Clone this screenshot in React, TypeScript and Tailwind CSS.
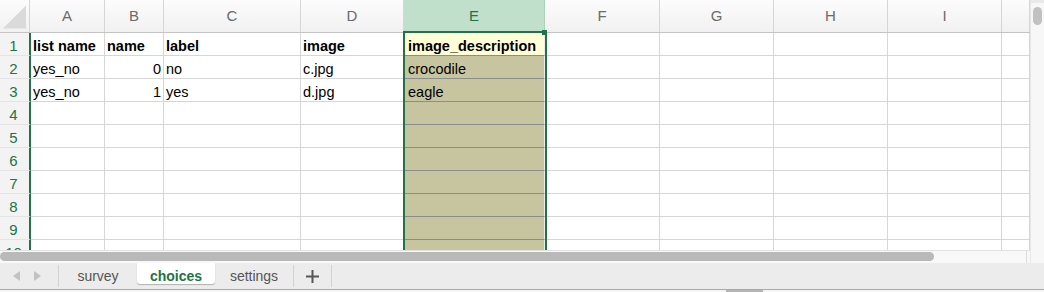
import React from "react";

type Col = { key: string; w: string; hw: string };

const cols: Col[] = [
  { key: "A", w: "w-[74px]", hw: "w-[75px]" },
  { key: "B", w: "w-[59px]", hw: "w-[59px]" },
  { key: "C", w: "w-[137px]", hw: "w-[137px]" },
  { key: "D", w: "w-[103px]", hw: "w-[103px]" },
  { key: "E", w: "w-[141px]", hw: "w-[141px]" },
  { key: "F", w: "w-[115px]", hw: "w-[115px]" },
  { key: "G", w: "w-[114px]", hw: "w-[114px]" },
  { key: "H", w: "w-[114px]", hw: "w-[114px]" },
  { key: "I", w: "w-[114px]", hw: "w-[114px]" },
  { key: "", w: "flex-1", hw: "flex-1" },
];

// cell values per row, "#" prefix = number (right aligned)
const data: string[][] = [
  ["list name", "name", "label", "image", "image_description"],
  ["yes_no", "#0", "no", "c.jpg", "crocodile"],
  ["yes_no", "#1", "yes", "d.jpg", "eagle"],
];

const GREEN = "text-[#217346]";

function HeaderRow() {
  return (
    <div className="flex h-[33px] border-b border-[#c4c4c4] bg-gradient-to-b from-[#fcfcfc] to-[#f1f1f1]">
      <div className="w-[30px] shrink-0 border-r border-[#d6d6d6] flex items-end justify-end p-[3px]">
        <svg width="24" height="24" viewBox="0 0 24 24">
          <polygon points="24,0 24,24 0,24" fill="#dadada" />
        </svg>
      </div>
      {cols.map((c, i) =>
        c.key === "E" ? (
          <div
            key={i}
            className={`${c.hw} shrink-0 border-r border-[#a8d3b6] bg-[#c1e0cb] flex items-center justify-center pt-[1px] text-[15px] ${GREEN}`}
          >
            {c.key}
          </div>
        ) : (
          <div
            key={i}
            className={`${c.hw} shrink-0 border-r border-[#d6d6d6] flex items-center justify-center pt-[1px] text-[15px] text-[#6b6b6b]`}
          >
            {c.key}
          </div>
        )
      )}
    </div>
  );
}

function BodyRow({ n, values }: { n: number; values: string[] }) {
  return (
    <div className="flex h-[23px] shrink-0">
      <div
        className={`w-[31px] shrink-0 border-r-2 border-r-[#217346] border-b border-b-[#e4e4e4] bg-[#f3f3f3] flex items-end justify-center pb-[1px] pr-[2px] leading-[17px] text-[15px] ${GREEN}`}
      >
        {n}
      </div>
      {cols.map((c, i) => {
        const raw = values[i] ?? "";
        const isNum = raw.startsWith("#");
        const text = isNum ? raw.slice(1) : raw;
        const bold = n === 1;
        if (c.key === "E") {
          return (
            <div
              key={i}
              className={`${c.w} shrink-0 border-r border-r-[#ececec] border-b border-b-[#8c8c8c] flex items-end px-[4px] leading-[17px] text-[14.5px] text-black ${
                n === 1 ? "bg-[#fffed6] font-bold" : "bg-[#c7c59f]"
              }`}
            >
              {text}
            </div>
          );
        }
        return (
          <div
            key={i}
            className={`${c.w} shrink-0 border-r border-b border-[#d6d6d6] bg-white flex items-end px-[2px] leading-[17px] text-[14.5px] text-black whitespace-nowrap overflow-hidden ${
              isNum ? "justify-end" : ""
            } ${bold ? "font-bold" : ""}`}
          >
            {text}
          </div>
        );
      })}
    </div>
  );
}

function Grid() {
  const rows = Array.from({ length: 10 }, (_, i) => i + 1);
  return (
    <div className="relative h-[250px] overflow-hidden bg-white">
      <HeaderRow />
      {rows.map((n) => (
        <BodyRow key={n} n={n} values={data[n - 1] ?? []} />
      ))}
      {/* selection outline of column E */}
      <div className="absolute left-[403px] top-[31px] w-[144px] bottom-0 border-t-2 border-x-2 border-[#217346] pointer-events-none" />
      <div className="absolute left-[542px] top-[30px] w-[5px] h-[5px] bg-[#217346]" />
    </div>
  );
}

function TabBar() {
  return (
    <div className="flex h-[27px] bg-[#ececec] border-b border-[#a9a9a9] font-['Liberation_Sans',Arial,sans-serif]">
      <div className="w-[59px] shrink-0 flex items-center gap-[12px] pl-[11px] border-r border-[#d2d2d2] my-[2px]">
        <svg width="10" height="12" viewBox="0 0 10 12">
          <polygon points="9,1 9,11 2,6" fill="#c2c2c2" />
        </svg>
        <svg width="10" height="12" viewBox="0 0 10 12">
          <polygon points="1,1 1,11 8,6" fill="#c2c2c2" />
        </svg>
      </div>
      <div className="w-[78px] shrink-0 flex items-center justify-center pt-[1px] text-[14px] text-[#555]">survey</div>
      <div className="w-[78px] shrink-0 h-[21px] bg-white rounded-b-[3px] shadow-[0_1px_1px_rgba(0,0,0,0.25)] flex items-center justify-center pt-[5px] text-[14px] font-bold text-[#217346]">
        choices
      </div>
      <div className="w-[79px] shrink-0 flex items-center justify-center pt-[1px] text-[14px] text-[#555] border-r border-[#d2d2d2] my-[2px]">
        settings
      </div>
      <div className="w-[38px] shrink-0 flex items-center justify-center border-r border-[#d2d2d2] my-[2px]">
        <svg width="13" height="13" viewBox="0 0 13 13">
          <rect x="5.5" y="0" width="2" height="13" fill="#555" />
          <rect x="0" y="5.5" width="13" height="2" fill="#555" />
        </svg>
      </div>
    </div>
  );
}

export default function App() {
  return (
    <div className="w-[1044px] h-[292px] overflow-hidden bg-white font-['Liberation_Sans',Arial,sans-serif]">
      <div className="flex h-[263px]">
        <div className="w-[1030px] shrink-0 flex flex-col">
          <Grid />
          <div className="h-[13px] border-t border-[#e2e2e2] bg-[#f8f8f8] pr-[3px]">
            <div className="h-full border-r border-[#dcdcdc] pt-[1px]">
              <div className="h-[9px] w-[934px] rounded-full bg-[#b9b9b9]" />
            </div>
          </div>
        </div>
        <div className="w-[14px] shrink-0 bg-[#f7f7f7] border-l border-[#e6e6e6] border-t-[3px] border-t-[#e9e9e9] pt-[4px] pl-[2px]">
          <div className="w-[9px] h-[18px] rounded-full bg-[#c1c1c1]" />
        </div>
      </div>
      <TabBar />
      <div className="h-[2px] bg-[#f4f4f4] flex">
        <div className="ml-[726px] w-[37px] h-full bg-[#b5b5b5]" />
      </div>
    </div>
  );
}
